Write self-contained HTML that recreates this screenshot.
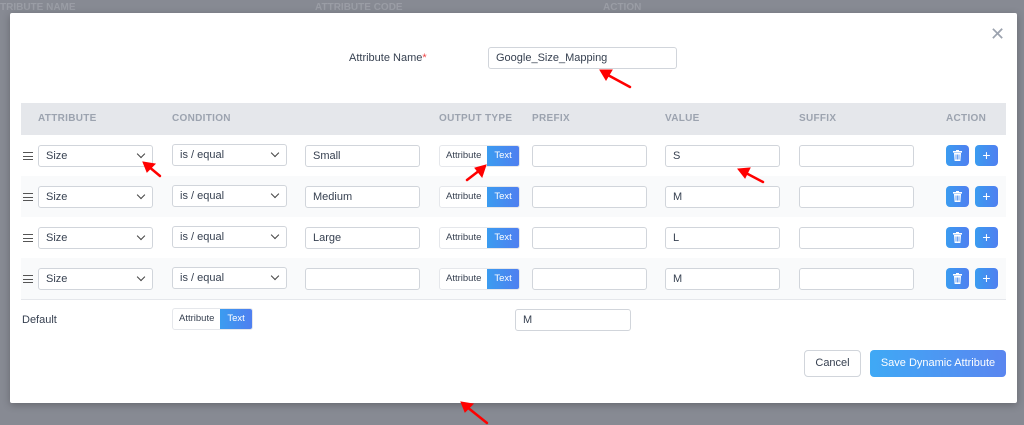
<!DOCTYPE html><html><head><style>
*{box-sizing:border-box;margin:0;padding:0}
body{width:1024px;height:425px;background:#878a93;font-family:"Liberation Sans",sans-serif;position:relative;overflow:hidden;color:#374151}
.a{position:absolute}
.modal{left:10px;top:13px;width:1007px;height:390px;background:#fff;border-radius:2px;box-shadow:0 2px 8px rgba(0,0,0,.25)}
.inp{position:absolute;height:22px;border:1px solid #d1d5db;border-radius:3px;background:#fff;font-size:11px;padding:0 7px;line-height:20px;color:#374151}
.sel:after{content:"";position:absolute;right:8px;top:5px;width:5px;height:5px;border-right:1.3px solid #444;border-bottom:1.3px solid #444;transform:rotate(45deg)}
.th{position:absolute;top:113px;font-size:10px;font-weight:bold;color:#9ca3af;letter-spacing:.3px}
.tg{position:absolute;height:22px;border:1px solid #e5e7eb;border-radius:3px;font-size:9.5px;display:flex;overflow:hidden;background:#fff}
.tg span{line-height:20px;padding:0 6px;color:#374151}
.tg span+span{background:linear-gradient(90deg,#3b9cf0,#4f7ff0);color:#fff;padding:0 7px}
.bt{position:absolute;width:23px;height:21px;border-radius:4px;background:linear-gradient(90deg,#3b9cf0,#4f7ff0);color:#fff;font-size:14px;text-align:center;line-height:20px}
.bt svg{position:absolute;left:7px;top:5px}
.hb{position:absolute;left:23px;width:10px;height:8px;border-top:1.3px solid #555;border-bottom:1.3px solid #555}
.hb:after{content:"";position:absolute;left:0;right:0;top:2.5px;border-top:1.3px solid #555}
</style></head><body>
<div class="a" style="left:0;top:2px;font-size:10px;font-weight:bold;color:#9a9da5">TRIBUTE NAME</div>
<div class="a" style="left:315px;top:2px;font-size:10px;font-weight:bold;color:#9a9da5">ATTRIBUTE CODE</div>
<div class="a" style="left:603px;top:2px;font-size:10px;font-weight:bold;color:#9a9da5">ACTION</div>
<div class="a modal"></div>
<div class="a" style="left:990px;top:24px;font-size:18px;color:#9ca3af">✕</div>
<div class="a" style="left:349px;top:52px;font-size:11px;color:#374151;font-weight:500">Attribute Name<span style="color:#ef4444">*</span></div>
<div class="inp" style="left:488px;top:47px;width:189px">Google_Size_Mapping</div>
<div class="a" style="left:21px;top:103px;width:985px;height:32px;background:#e5e7eb"></div>
<div class="a" style="left:21px;top:176px;width:985px;height:41px;background:#f9fafb"></div>
<div class="a" style="left:21px;top:258px;width:985px;height:41px;background:#f9fafb"></div>
<div class="a" style="left:21px;top:299px;width:985px;height:1px;background:#e5e7eb"></div>
<div class="th" style="left:38px">ATTRIBUTE</div><div class="th" style="left:172px">CONDITION</div><div class="th" style="left:439px">OUTPUT TYPE</div><div class="th" style="left:532px">PREFIX</div><div class="th" style="left:665px">VALUE</div><div class="th" style="left:799px">SUFFIX</div><div class="th" style="left:946px">ACTION</div>
<div id="rows"></div>
<script>
var v=[["Small","S"],["Medium","M"],["Large","L"],["","M"]],h="";
var tr='<svg width="9" height="11" viewBox="0 0 9 11"><rect x="0" y="1" width="9" height="1.6" fill="#fff"/><rect x="3" y="0" width="3" height="1.5" fill="#fff"/><path d="M1 3h7l-.6 8H1.6z" fill="#fff"/><path d="M3 4.5v5M4.5 4.5v5M6 4.5v5" stroke="#4a8df0" stroke-width=".8"/></svg>';
v.forEach(function(r,i){var t=145+41*i;
h+='<div class="hb" style="top:'+(t+7)+'px"></div>'+
'<div class="inp sel" style="left:38px;top:'+t+'px;width:115px">Size</div>'+
'<div class="inp sel" style="left:172px;top:'+(t-1)+'px;width:115px">is / equal</div>'+
'<div class="inp" style="left:305px;top:'+t+'px;width:115px">'+r[0]+'</div>'+
'<div class="tg" style="left:439px;top:'+t+'px"><span>Attribute</span><span>Text</span></div>'+
'<div class="inp" style="left:532px;top:'+t+'px;width:115px"></div>'+
'<div class="inp" style="left:665px;top:'+t+'px;width:115px">'+r[1]+'</div>'+
'<div class="inp" style="left:799px;top:'+t+'px;width:115px"></div>'+
'<div class="bt" style="left:946px;top:'+t+'px">'+tr+'</div>'+
'<div class="bt" style="left:975px;top:'+t+'px">+</div>';});
document.getElementById("rows").innerHTML=h;
</script>
<div class="a" style="left:22px;top:314px;font-size:11px;font-weight:500">Default</div>
<div class="tg" style="left:172px;top:308px"><span>Attribute</span><span>Text</span></div>
<div class="inp" style="left:515px;top:309px;width:116px">M</div>
<div class="a" style="left:804px;top:350px;width:57px;height:27px;border:1px solid #d1d5db;border-radius:4px;font-size:11px;text-align:center;line-height:25px">Cancel</div>
<div class="a" style="left:870px;top:350px;width:136px;height:27px;border-radius:4px;background:linear-gradient(90deg,#3fa9f5,#5a86f0);color:#fff;font-size:11px;text-align:center;line-height:27px">Save Dynamic Attribute</div>
<svg class="a" style="left:0;top:0" width="1024" height="425">
<g fill="#f00" stroke="#f00" stroke-width="2.5" stroke-linecap="round">
<line x1="630" y1="87" x2="606" y2="74"/><polygon points="600,70 612,70 606,80" stroke-width="1"/>
<line x1="160" y1="176" x2="148" y2="166"/><polygon points="143,162 155,164 147,172" stroke-width="1"/>
<line x1="467" y1="180" x2="480" y2="170"/><polygon points="486,165 482,177 475,168" stroke-width="1"/>
<line x1="763" y1="182" x2="744" y2="172"/><polygon points="738,169 750,168 745,178" stroke-width="1"/>
<line x1="487" y1="423" x2="467" y2="407"/><polygon points="461,402 473,404 465,412" stroke-width="1"/>
</g></svg>
</body></html>
